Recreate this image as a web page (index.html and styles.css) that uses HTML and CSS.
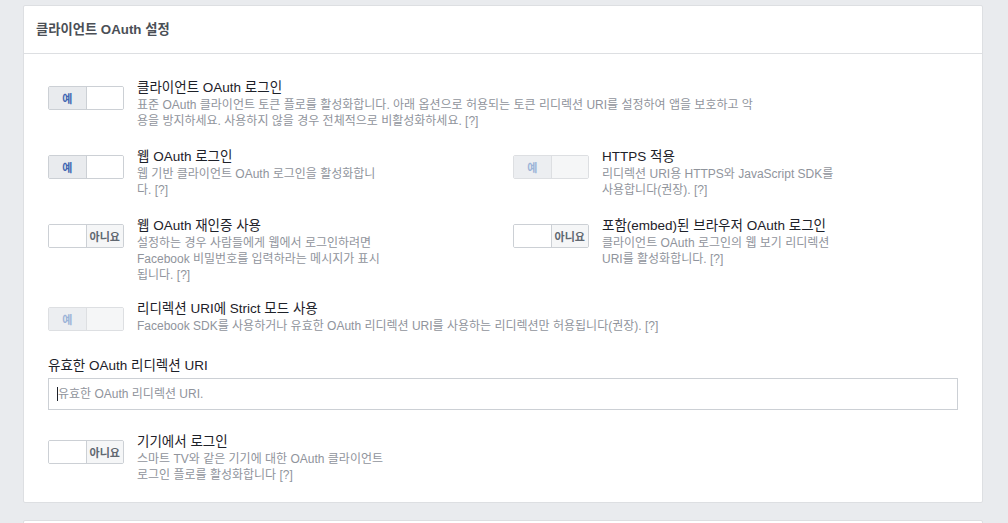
FILE: index.html
```html
<!DOCTYPE html>
<html lang="ko">
<head>
<meta charset="utf-8">
<title>클라이언트 OAuth 설정</title>
<link rel="stylesheet" href="styles.css">
</head>
<body>
<div class="page">
  <section class="card">
    <header class="card-head">클라이언트 OAuth 설정</header>
    <div class="card-body">
      <div class="setting wide">
        <div class="toggle on"><span class="seg yes">예</span><span class="seg no"></span></div>
        <div class="text">
          <div class="title">클라이언트 OAuth 로그인</div>
          <div class="desc">표준 OAuth 클라이언트 토큰 플로를 활성화합니다. 아래 옵션으로 허용되는 토큰 리디렉션 URI를 설정하여 앱을 보호하고 악용을 방지하세요. 사용하지 않을 경우 전체적으로 비활성화하세요. <span class="help">[?]</span></div>
        </div>
      </div>

      <div class="grid">
        <div class="setting">
          <div class="toggle on"><span class="seg yes">예</span><span class="seg no"></span></div>
          <div class="text">
            <div class="title">웹 OAuth 로그인</div>
            <div class="desc">웹 기반 클라이언트 OAuth 로그인을 활성화합니다. <span class="help">[?]</span></div>
          </div>
        </div>
        <div class="setting">
          <div class="toggle on disabled"><span class="seg yes">예</span><span class="seg no"></span></div>
          <div class="text">
            <div class="title">HTTPS 적용</div>
            <div class="desc">리디렉션 URI용 HTTPS와 JavaScript SDK를 사용합니다(권장). <span class="help">[?]</span></div>
          </div>
        </div>
        <div class="setting last-row">
          <div class="toggle off"><span class="seg yes"></span><span class="seg no">아니요</span></div>
          <div class="text roomy">
            <div class="title">웹 OAuth 재인증 사용</div>
            <div class="desc">설정하는 경우 사람들에게 웹에서 로그인하려면 Facebook 비밀번호를 입력하라는 메시지가 표시됩니다. <span class="help">[?]</span></div>
          </div>
        </div>
        <div class="setting last-row">
          <div class="toggle off"><span class="seg yes"></span><span class="seg no">아니요</span></div>
          <div class="text">
            <div class="title">포함(embed)된 브라우저 OAuth 로그인</div>
            <div class="desc">클라이언트 OAuth 로그인의 웹 보기 리디렉션 URI를 활성화합니다. <span class="help">[?]</span></div>
          </div>
        </div>
      </div>

      <div class="setting wide strict">
        <div class="toggle on disabled"><span class="seg yes">예</span><span class="seg no"></span></div>
        <div class="text">
          <div class="title">리디렉션 URI에 Strict 모드 사용</div>
          <div class="desc">Facebook SDK를 사용하거나 유효한 OAuth 리디렉션 URI를 사용하는 리디렉션만 허용됩니다(권장). <span class="help">[?]</span></div>
        </div>
      </div>

      <div class="field">
        <label class="field-label" for="uri">유효한 OAuth 리디렉션 URI</label>
        <div class="input-wrap">
          <input id="uri" class="input" type="text" placeholder="유효한 OAuth 리디렉션 URI.">
          <span class="caret"></span>
        </div>
      </div>

      <div class="setting">
        <div class="toggle off"><span class="seg yes"></span><span class="seg no">아니요</span></div>
        <div class="text roomy">
          <div class="title">기기에서 로그인</div>
          <div class="desc">스마트 TV와 같은 기기에 대한 OAuth 클라이언트 로그인 플로를 활성화합니다 <span class="help">[?]</span></div>
        </div>
      </div>
    </div>
  </section>
  <section class="card next"></section>
</div>
</body>
</html>
```

FILE: styles.css
```css
html, body {
  margin: 0;
  padding: 0;
  background: #e9ebee;
}
body {
  font-family: "Liberation Sans", "Noto Sans CJK KR", sans-serif;
  color: #1d2129;
  font-feature-settings: "palt";
}
.page {
  padding: 5px 0 0 23px;
}
.card {
  width: 958px;
  background: #fff;
  border: 1px solid #dddfe2;
  border-radius: 2px;
}
.card.next {
  margin-top: 17px;
  height: 40px;
}
.card-head {
  height: 47px;
  line-height: 47px;
  padding: 0 12px;
  border-bottom: 1px solid #dddfe2;
  font-size: 13.3px;
  font-weight: bold;
  color: #4b4f56;
}
.card-body {
  padding: 25px 24px 19px 24px;
}
.setting {
  display: flex;
  align-items: flex-start;
  gap: 13px;
  margin-bottom: 19px;
}
.setting:last-child {
  margin-bottom: 0;
}
.grid {
  display: grid;
  grid-template-columns: 455px 455px;
  column-gap: 10px;
}
.grid .setting {
  margin-bottom: 19px;
}
.grid .setting.last-row {
  margin-bottom: 17px;
}
.setting.strict {
  margin-bottom: 23px;
}
.toggle {
  display: flex;
  width: 76px;
  height: 24px;
  flex: none;
  margin-top: 7px;
  box-sizing: border-box;
  border: 1px solid #ccd0d5;
  border-radius: 2px;
  overflow: hidden;
}
.seg {
  flex: 1;
  display: flex;
  align-items: center;
  justify-content: center;
  font-size: 11px;
  font-weight: bold;
  background: #fff;
}
.seg.yes {
  border-right: 1px solid #ccd0d5;
}
.toggle.on .seg.yes {
  background: #e9ebee;
  color: #4267b2;
}
.toggle.off .seg.no {
  background: #f5f6f7;
  color: #606770;
}
.toggle.disabled {
  border-color: #dddfe2;
}
.toggle.disabled .seg.yes {
  background: #eceef1;
  color: #9cb4d8;
  border-right-color: #dddfe2;
}
.toggle.disabled .seg.no {
  background: #f5f6f7;
}
.text {
  width: 242px;
}
.text.roomy {
  width: 248px;
}
.wide .text {
  width: 618px;
}
.title {
  font-size: 13.5px;
  line-height: 18px;
  color: #1d2129;
}
.desc {
  font-size: 12px;
  line-height: 16px;
  color: #90949c;
}
.help {
  color: #90949c;
}
.field {
  margin-bottom: 23px;
}
.field-label {
  display: block;
  font-size: 13.5px;
  line-height: 18px;
  color: #1d2129;
  margin-bottom: 3px;
}
.input-wrap {
  position: relative;
}
.input {
  display: block;
  width: 100%;
  box-sizing: border-box;
  height: 32px;
  border: 1px solid #ccd0d5;
  border-radius: 0;
  padding: 0 9px;
  font-family: inherit;
  font-size: 12px;
  color: #1d2129;
  outline: none;
}
.input::placeholder {
  color: #90949c;
}
.caret {
  position: absolute;
  left: 9px;
  top: 9px;
  width: 1px;
  height: 14px;
  background: #1d2129;
}
```
